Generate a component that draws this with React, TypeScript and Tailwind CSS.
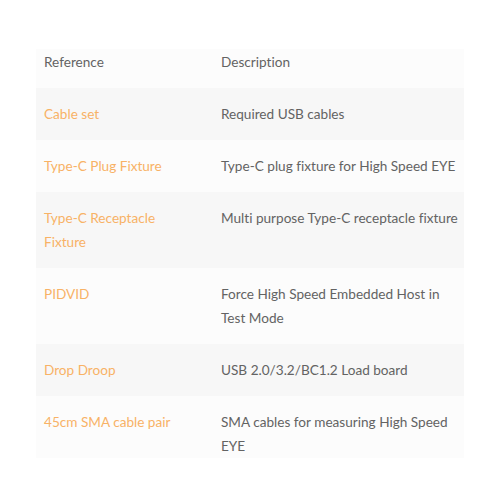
import React from "react";

const rows = [
  { ref: "Cable set", desc: "Required USB cables" },
  { ref: "Type-C Plug Fixture", desc: "Type-C plug fixture for High Speed EYE" },
  { ref: "Type-C Receptacle Fixture", desc: "Multi purpose Type-C receptacle fixture" },
  { ref: "PIDVID", desc: "Force High Speed Embedded Host in Test Mode" },
  { ref: "Drop Droop", desc: "USB 2.0/3.2/BC1.2 Load board" },
  { ref: "45cm SMA cable pair", desc: "SMA cables for measuring High Speed EYE" },
];

export default function App() {
  return (
    <div className="w-[500px] h-[500px] bg-white pt-[49px] px-[36px] font-['Lato',sans-serif] text-[13.6px] leading-[24px] text-[#636363] [font-variant-ligatures:none]">
      <table className="w-full border-collapse table-fixed">
        <colgroup>
          <col className="w-[177px]" />
          <col />
        </colgroup>
        <thead>
          <tr className="bg-[#fcfcfc]">
            <th className="text-left font-normal px-2 pt-px pb-[14px] align-top">Reference</th>
            <th className="text-left font-normal px-2 pt-px pb-[14px] align-top">Description</th>
          </tr>
        </thead>
        <tbody>
          {rows.map((r, i) => {
            const last = i === rows.length - 1;
            return (
              <tr key={r.ref} className={i % 2 === 0 ? "bg-[#f7f7f7]" : "bg-[#fcfcfc]"}>
                <td className={`pl-2 pr-6 pt-[14px] align-top text-[#f8b266] ${last ? "pb-0 h-[58px]" : "pb-[14px]"}`}>
                  {r.ref}
                </td>
                <td className={`pl-2 pr-1 pt-[14px] align-top ${last ? "pb-0 h-[58px]" : "pb-[14px]"}`}>
                  {r.desc}
                </td>
              </tr>
            );
          })}
        </tbody>
      </table>
    </div>
  );
}
